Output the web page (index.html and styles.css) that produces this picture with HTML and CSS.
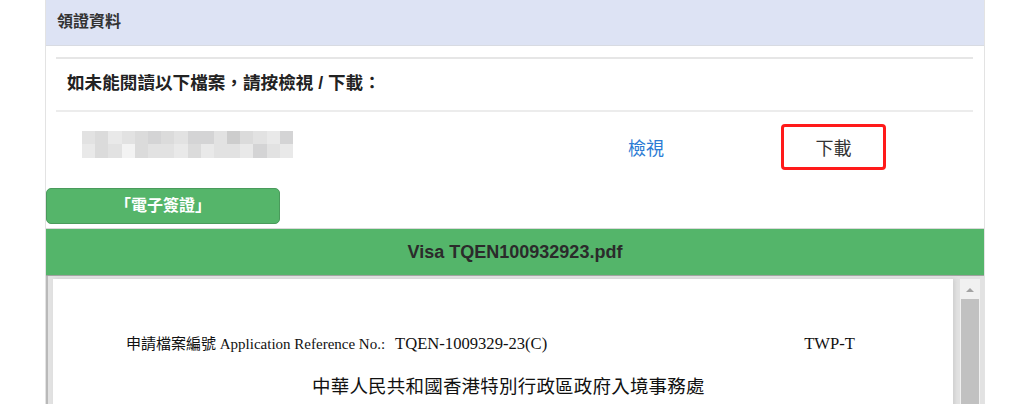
FILE: index.html
```html
<!DOCTYPE html>
<html lang="zh-Hant">
<head>
<meta charset="utf-8">
<title>領證資料</title>
<link rel="stylesheet" href="styles.css">
</head>
<body>
<div class="panel">
  <div class="panel-head">領證資料</div>
  <div class="panel-body">
    <div class="notice">如未能閱讀以下檔案，請按檢視 / 下載：</div>
    <div class="file-row">
      <div class="mosaic">
        <i class="g3"></i><i class="g2"></i><i class="g4"></i><i class="g3"></i><i class="g2"></i><i class="g1"></i><i class="g2"></i><i class="g3"></i><i class="g1"></i><i class="g1"></i><i class="g3"></i><i class="g0"></i><i class="g2"></i><i class="g3"></i><i class="g4"></i><i class="g1"></i>
        <i class="g4"></i><i class="g2"></i><i class="g3"></i><i class="g5"></i><i class="g2"></i><i class="g3"></i><i class="g3"></i><i class="g4"></i><i class="g2"></i><i class="g4"></i><i class="g3"></i><i class="g3"></i><i class="g4"></i><i class="g1"></i><i class="g3"></i><i class="g4"></i>
      </div>
      <a class="view-link" href="#">檢視</a>
      <a class="download-box" href="#">下載</a>
    </div>
  </div>
  <div class="evisa-btn">「電子簽證」</div>
  <div class="file-bar">Visa TQEN100932923.pdf</div>
  <div class="viewer">
    <div class="page">
      <div class="ref-line">
        <span class="ref-label">申請檔案編號 Application Reference No.:</span>
        <span class="ref-no">TQEN-1009329-23(C)</span>
        <span class="ref-code">TWP-T</span>
      </div>
      <div class="dept">中華人民共和國香港特別行政區政府入境事務處</div>
    </div>
    <div class="scrollbar">
      <div class="arrow"></div>
      <div class="thumb"></div>
    </div>
  </div>
</div>
</body>
</html>
```
FILE: styles.css
```css
html, body {
  margin: 0;
  padding: 0;
  background: #ffffff;
}
body {
  font-family: "Liberation Sans", "Noto Sans CJK TC", sans-serif;
  color: #333333;
  height: 404px;
  overflow: hidden;
}
.panel {
  margin-left: 45px;
  width: 938px;
  border-left: 1px solid #e3e3e3;
  border-right: 1px solid #e3e3e3;
  min-height: 404px;
}
.panel-head {
  height: 45px;
  background: #dde3f4;
  border-bottom: 1px solid #d8dbe2;
  padding-left: 11px;
  font-size: 16px;
  font-weight: bold;
  line-height: 44px;
  color: #333333;
}
.panel-body {
  padding: 11px 11px 0 10px;
}
.notice {
  border-top: 2px solid #e6e6e6;
  border-bottom: 2px solid #ececec;
  height: 51px;
  line-height: 48px;
  padding-left: 11px;
  font-size: 17.6px;
  font-weight: bold;
  color: #222222;
}
.file-row {
  display: flex;
  align-items: center;
  height: 72px;
  padding-left: 26px;
}
.mosaic {
  display: grid;
  grid-template-columns: repeat(16, 13.2px);
  grid-template-rows: 13.5px 13.5px;
  margin-top: -8px;
}
.mosaic i { display: block; }
.g0 { background: #cdcdcd; }
.g1 { background: #d4d4d5; }
.g2 { background: #dbdbdb; }
.g3 { background: #e2e2e2; }
.g4 { background: #e9e9e9; }
.g5 { background: #f3f3f3; }
.view-link {
  margin-left: 335px;
  margin-top: -2px;
  font-size: 18px;
  color: #2b7bd4;
  text-decoration: none;
}
.download-box {
  margin-left: 117px;
  margin-top: -2px;
  width: 99px;
  height: 40px;
  border: 3px solid #ff1a1a;
  border-radius: 4px;
  display: flex;
  align-items: center;
  justify-content: center;
  font-size: 18px;
  color: #333333;
  text-decoration: none;
}
.evisa-btn {
  margin-top: 4px;
  width: 232px;
  height: 34px;
  background: #55b56a;
  border: 1px solid #4a9a5c;
  border-radius: 5px;
  color: #ffffff;
  font-weight: bold;
  font-size: 16px;
  line-height: 34px;
  text-align: center;
}
.file-bar {
  margin-top: 4px;
  height: 46px;
  background: #54b56a;
  border-top: 1px solid #d9d9d9;
  border-bottom: 1px solid #9fa39f;
  text-align: center;
  line-height: 46px;
  font-size: 18px;
  font-weight: bold;
  color: #2b2b2b;
}
.viewer {
  display: flex;
  height: 140px;
  background: #e2e2e2;
  border-left: 2px solid #b9b9b9;
  padding: 3px 3px 0 5px;
}
.page {
  width: 900px;
  background: #ffffff;
  box-shadow: 2px 0 4px #cfcfcf;
  font-family: "Liberation Serif", "Noto Sans CJK TC", serif;
  color: #111111;
}
.ref-line {
  display: flex;
  align-items: baseline;
  margin-top: 53px;
  padding-left: 73px;
}
.ref-label {
  font-size: 15px;
}
.ref-no {
  margin-left: 10px;
  font-size: 16.6px;
}
.ref-code {
  margin-left: 257px;
  font-size: 16.6px;
}
.dept {
  margin-top: 18px;
  padding-left: 259px;
  font-size: 18.5px;
  letter-spacing: 0.2px;
}
.scrollbar {
  margin-left: 7px;
  width: 20px;
  background: #f1f1f1;
  display: flex;
  flex-direction: column;
  align-items: center;
}
.arrow {
  margin-top: 9px;
  width: 0;
  height: 0;
  border-left: 4px solid transparent;
  border-right: 4px solid transparent;
  border-bottom: 4px solid #a3a3a3;
}
.thumb {
  margin-top: 7px;
  width: 18px;
  flex: 1;
  background: #c1c1c1;
}
```
